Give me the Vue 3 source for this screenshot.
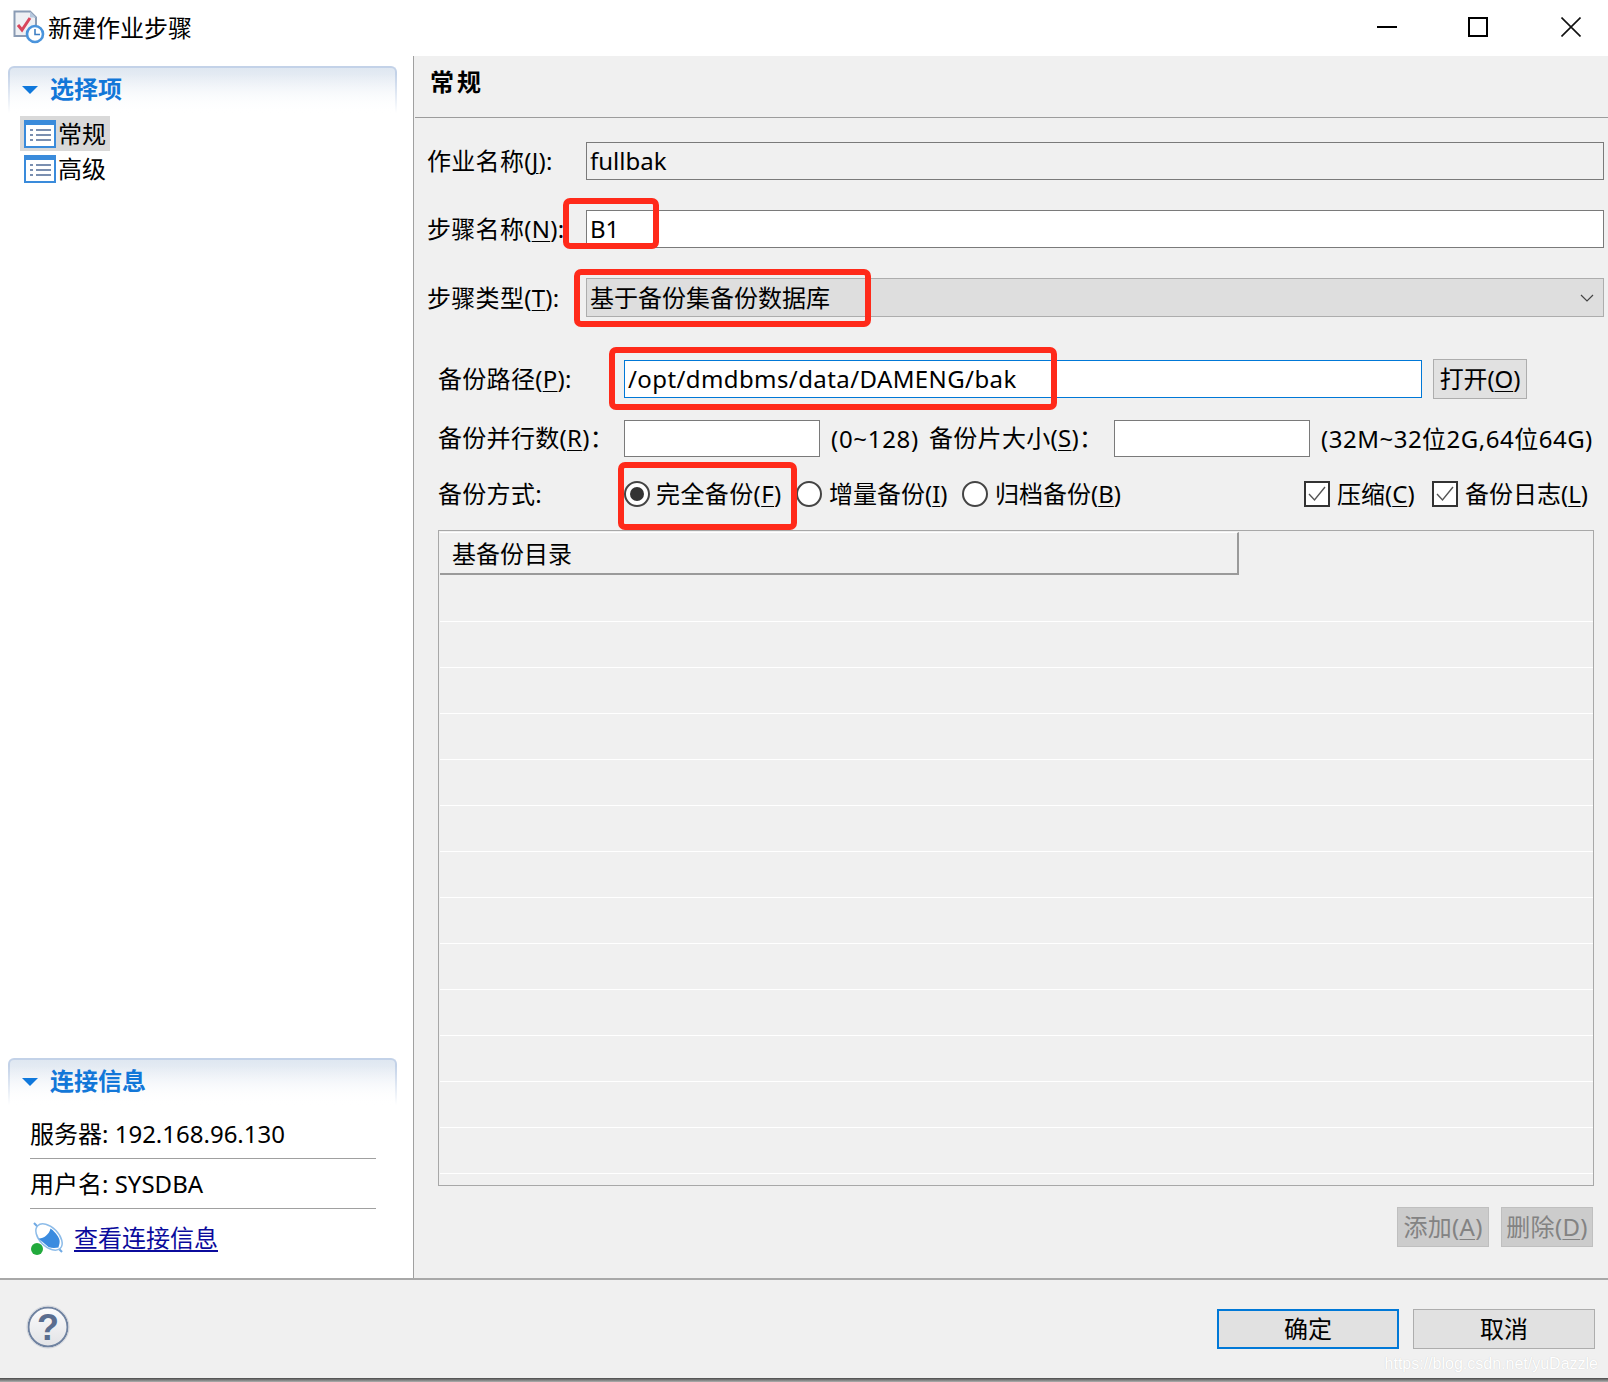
<script setup>
const rows = Array.from({ length: 13 }, (_, i) => i)
</script>

<template>
  <div class="app">
    <header class="titlebar">
      <svg class="app-icon" width="32" height="34" viewBox="0 0 32 34">
        <path d="M1.5 1.5H17L23 7.5V26H1.5Z" fill="#eef0f4" stroke="#8a9bb4" stroke-width="2" />
        <path d="M17 1.5V7.5H23Z" fill="#b7c8de" />
        <path d="M5 15L9 20L17 8" fill="none" stroke="#d8455c" stroke-width="3" />
        <circle cx="22" cy="24" r="8" fill="#fff" stroke="#4a94dc" stroke-width="2.6" />
        <path d="M22 19V24.5H27" fill="none" stroke="#3f7fc4" stroke-width="1.6" />
      </svg>
      <span class="title-text">新建作业步骤</span>
      <div class="win-controls">
        <svg width="20" height="20" viewBox="0 0 20 20"><path d="M0 10H20" stroke="#000" stroke-width="2" /></svg>
        <svg width="20" height="20" viewBox="0 0 20 20"><rect x="1" y="1" width="18" height="18" fill="none" stroke="#000" stroke-width="2" /></svg>
        <svg class="close" width="20" height="20" viewBox="0 0 20 20"><path d="M0.5 0.5L19.5 19.5M19.5 0.5L0.5 19.5" stroke="#111" stroke-width="1.6" /></svg>
      </div>
    </header>

    <main class="main">
      <aside class="left">
        <section class="section-head">
          <span class="tri"></span><span class="section-title">选择项</span>
        </section>
        <ul class="tree">
          <li class="tree-item selected">
            <svg class="tree-icon" width="32" height="28" viewBox="0 0 32 28">
              <rect x="1" y="1" width="30" height="26" fill="#fff" stroke="#3a8bdb" stroke-width="2" />
              <rect x="0" y="0" width="32" height="5" fill="#3a8bdb" />
              <path d="M6 10H9M12 10H27M6 15H9M12 15H27M6 20H9M12 20H27" stroke="#7a8fb0" stroke-width="2" />
            </svg>
            <span>常规</span>
          </li>
          <li class="tree-item">
            <svg class="tree-icon" width="32" height="28" viewBox="0 0 32 28">
              <rect x="1" y="1" width="30" height="26" fill="#fff" stroke="#3a8bdb" stroke-width="2" />
              <rect x="0" y="0" width="32" height="5" fill="#3a8bdb" />
              <path d="M6 10H9M12 10H27M6 15H9M12 15H27M6 20H9M12 20H27" stroke="#7a8fb0" stroke-width="2" />
            </svg>
            <span>高级</span>
          </li>
        </ul>

        <div class="spacer"></div>

        <section class="section-head">
          <span class="tri"></span><span class="section-title">连接信息</span>
        </section>
        <div class="conn">
          <div class="conn-row">服务器: 192.168.96.130</div>
          <div class="conn-row">用户名: SYSDBA</div>
          <div class="conn-link">
            <svg width="34" height="34" viewBox="0 0 34 34">
              <path d="M4 2L32 31" stroke="#6fa9e4" stroke-width="2" />
              <ellipse cx="19" cy="16" rx="16" ry="9.5" transform="rotate(45 19 16)" fill="#fff" stroke="#8dbce9" stroke-width="1.5" />
              <path d="M8.5 17.5C13 18 19 14 20.5 7.5C23 9 27 13 29 17.5C30.5 21 29 24 28.5 26.5C26 27 22 27.5 18.5 26Z" fill="#3a8bdf" />
              <circle cx="7" cy="28" r="6" fill="#22aa3c" />
            </svg>
            <a class="link">查看连接信息</a>
          </div>
        </div>
      </aside>

      <div class="right">
        <h2 class="page-title">常规</h2>
        <div class="form">
          <div class="row r1">
            <label class="lab">作业名称(<u>J</u>):</label>
            <div class="input readonly">fullbak</div>
          </div>
          <div class="row r2">
            <label class="lab">步骤名称(<u>N</u>):</label>
            <div class="input">B1</div>
          </div>
          <div class="row r3">
            <label class="lab">步骤类型(<u>T</u>):</label>
            <div class="input combo">
              <span>基于备份集备份数据库</span>
              <svg width="14" height="8" viewBox="0 0 14 8"><path d="M1 1L7 7L13 1" fill="none" stroke="#444" stroke-width="1.2" /></svg>
            </div>
          </div>
          <div class="sub">
            <div class="row r4">
              <label class="lab2">备份路径(<u>P</u>):</label>
              <div class="input focus">/opt/dmdbms/data/DAMENG/bak</div>
              <button class="btn open">打开(<u>O</u>)</button>
            </div>
            <div class="row r5">
              <label class="lab2">备份并行数(<u>R</u>)：</label>
              <div class="input small"></div>
              <span class="range1">(0~128)</span>
              <label class="lab3">备份片大小(<u>S</u>)：</label>
              <div class="input small2"></div>
              <span class="range2">(32M~32位2G,64位64G)</span>
            </div>
            <div class="row r6">
              <label class="lab2">备份方式:</label>
              <span class="opt o1"><i class="radio on"></i><span class="opt-text">完全备份(<u>F</u>)</span></span>
              <span class="opt o2"><i class="radio"></i><span>增量备份(<u>I</u>)</span></span>
              <span class="opt o3"><i class="radio"></i><span>归档备份(<u>B</u>)</span></span>
              <span class="chk c1">
                <svg width="26" height="26" viewBox="0 0 26 26"><rect x="1" y="1" width="24" height="24" fill="#fff" stroke="#333" stroke-width="2" /><path d="M5 13L10.5 19L21 6" fill="none" stroke="#555" stroke-width="1.4" /></svg>
                <span>压缩(<u>C</u>)</span>
              </span>
              <span class="chk c2">
                <svg width="26" height="26" viewBox="0 0 26 26"><rect x="1" y="1" width="24" height="24" fill="#fff" stroke="#333" stroke-width="2" /><path d="M5 13L10.5 19L21 6" fill="none" stroke="#555" stroke-width="1.4" /></svg>
                <span>备份日志(<u>L</u>)</span>
              </span>
            </div>
            <div class="table">
              <div class="thead">基备份目录</div>
              <div v-for="r in rows" :key="r" class="trow"></div>
            </div>
            <div class="actions">
              <button class="btn disabled add">添加(<u>A</u>)</button>
              <button class="btn disabled">删除(<u>D</u>)</button>
            </div>
          </div>
        </div>
      </div>
    </main>

    <footer class="footer">
      <svg class="help" width="44" height="44" viewBox="0 0 44 44">
        <defs>
          <linearGradient id="helpFill" x1="0" y1="0" x2="0" y2="1">
            <stop offset="0" stop-color="#fbfbfc" />
            <stop offset="1" stop-color="#e2e3e6" />
          </linearGradient>
        </defs>
        <circle cx="22" cy="22" r="19.5" fill="url(#helpFill)" stroke="#6f82a0" stroke-width="2" />
        <circle cx="22" cy="22" r="21" fill="none" stroke="#cfd3da" stroke-width="1" />
        <text x="22" y="35" text-anchor="middle" class="help-q">?</text>
      </svg>
      <div class="foot-btns">
        <button class="btn big primary">确定</button>
        <button class="btn big">取消</button>
      </div>
      <span class="watermark">https://blog.csdn.net/yuDazzle</span>
    </footer>
    <div class="edge"></div>

    <div class="mark m1"></div>
    <div class="mark m2"></div>
    <div class="mark m3"></div>
    <div class="mark m4"></div>
  </div>
</template>

<style>
html, body { margin: 0; padding: 0; background: #fff; }
</style>

<style scoped>
.app {
  position: relative;
  width: 1608px;
  height: 1382px;
  display: flex;
  flex-direction: column;
  overflow: hidden;
  background: #fff;
  color: #000;
  font-family: "Noto Sans", "Noto Sans CJK SC", sans-serif;
  font-size: 24px;
  line-height: 32px;
}
u { text-underline-offset: 3px; text-decoration-thickness: 1px; }
.titlebar {
  height: 56px;
  flex: none;
  display: flex;
  align-items: center;
  padding-left: 13px;
  box-sizing: border-box;
}
.app-icon { margin-right: 3px; margin-top: -2px; }
.title-text { flex: none; }
.win-controls {
  margin-left: auto;
  display: flex;
  gap: 71px;
  padding-right: 27px;
  margin-top: -2px;
}
.close { margin-left: 2px; }
.main { flex: none; height: 1222px; display: flex; }
.left {
  width: 414px;
  flex: none;
  box-sizing: border-box;
  border-right: 1px solid #a0a0a0;
  padding: 10px 16px 0 8px;
  display: flex;
  flex-direction: column;
}
.section-head {
  position: relative;
  height: 47px;
  flex: none;
  box-sizing: border-box;
  border: 2px solid #c3d2e8;
  border-bottom: 0;
  border-radius: 6px 6px 0 0;
  background: linear-gradient(#dfe7f1, #fff);
  display: flex;
  align-items: center;
  padding: 0 0 4px 12px;
}
.section-head::after {
  content: "";
  position: absolute;
  left: -2px;
  right: -2px;
  top: 6px;
  bottom: 0;
  background: linear-gradient(rgba(255,255,255,0), #fff);
}
.tri {
  position: relative;
  z-index: 1;
  width: 0;
  height: 0;
  border-left: 8px solid transparent;
  border-right: 8px solid transparent;
  border-top: 8px solid #0f78dc;
  margin-right: 12px;
  margin-top: 2px;
}
.section-title {
  position: relative;
  z-index: 1;
  color: #1277d8;
  font-weight: 700;
}
.tree { list-style: none; margin: 3px 0 0; padding: 0 0 0 12px; }
.tree-item {
  display: flex;
  align-items: center;
  width: max-content;
  height: 35px;
  padding: 0 4px 0 4px;
  gap: 2px;
}
.tree-item.selected { background: #d9d9d9; }
.spacer { height: 872px; flex: none; }
.conn { padding: 0 21px 0 22px; }
.conn-row {
  height: 50px;
  line-height: 50px;
  box-sizing: border-box;
  border-bottom: 1px solid #a0a0a0;
  white-space: nowrap;
}
.conn-row:first-child { margin-top: 4px; }
.conn-link {
  display: flex;
  align-items: center;
  gap: 10px;
  margin-top: 12px;
}
.link { color: #0b0b9c; text-decoration: underline; text-underline-offset: 3px; }
.right {
  flex: 1;
  min-width: 0;
  background: #f0f0f0;
  display: flex;
  flex-direction: column;
}
.page-title {
  margin: 0 0 0 1px;
  height: 62px;
  flex: none;
  box-sizing: border-box;
  border-bottom: 1px solid #9c9c9c;
  padding: 10px 0 0 15px;
  font-size: 24px;
  font-weight: 700;
  letter-spacing: 3px;
  line-height: 32px;
}
.form { padding: 24px 4px 0 13px; }
.row { display: flex; align-items: center; white-space: nowrap; }
.lab { width: 159px; flex: none; letter-spacing: 0.3px; }
.lab2 { width: 186px; flex: none; letter-spacing: 0.3px; }
.lab3 { width: 185px; flex: none; letter-spacing: 0.3px; }
.r1 { height: 38px; }
.r2 { height: 38px; margin-top: 30px; }
.r3 { height: 39px; margin-top: 30px; }
.input {
  flex: 1;
  min-width: 0;
  height: 100%;
  box-sizing: border-box;
  border: 1px solid #7a7a7a;
  background: #fff;
  padding-left: 3px;
  line-height: 36px;
}
.readonly { background: #f0f0f0; }
.combo {
  background: #dedede;
  border-color: #adadad;
  display: flex;
  align-items: center;
  justify-content: space-between;
  padding-right: 9px;
}
.sub { padding: 43px 0 0 11px; }
.r4 { height: 38px; }
.focus { flex: none; width: 798px; border-color: #0078d7; letter-spacing: 0.4px; }
.open { margin-left: 11px; width: 94px; height: 40px; letter-spacing: -0.1px; padding-right: 3px; }
.btn {
  box-sizing: border-box;
  border: 1px solid #adadad;
  background: #e1e1e1;
  font: inherit;
  color: #000;
  padding: 0;
  white-space: nowrap;
}
.r5 { height: 37px; margin-top: 22px; }
.r5 label { margin-top: -2px; }
.small { flex: none; width: 196px; }
.small2 { flex: none; width: 196px; }
.range1 { width: 109px; flex: none; padding-left: 11px; box-sizing: border-box; letter-spacing: 0.7px; }
.range2 { padding-left: 11px; letter-spacing: 0.5px; }
.r6 { height: 34px; margin-top: 20px; }
.opt { display: flex; align-items: center; flex: none; }
.opt-text { letter-spacing: 0.4px; }
.o1 { width: 172px; }
.o2 { width: 166px; }
.o3 { width: 342px; }
.radio {
  width: 26px;
  height: 26px;
  flex: none;
  box-sizing: border-box;
  border: 2px solid #444;
  border-radius: 50%;
  background: #fff;
  margin-right: 6px;
  position: relative;
}
.o2 .radio, .o3 .radio { margin-right: 7px; }
.radio.on::after {
  content: "";
  position: absolute;
  left: 4px;
  top: 4px;
  width: 14px;
  height: 14px;
  border-radius: 50%;
  background: #333;
}
.chk { display: flex; align-items: center; flex: none; gap: 7px; }
.c1 { width: 128px; }
.table {
  margin-top: 19px;
  width: 1156px;
  height: 656px;
  box-sizing: border-box;
  border: 1px solid #a8a8a8;
  padding: 1px 0 0 1px;
}
.thead {
  width: 799px;
  height: 43px;
  margin-bottom: 1px;
  box-sizing: border-box;
  border-top: 1px solid #fff;
  border-right: 2px solid #9a9a9a;
  border-bottom: 2px solid #9a9a9a;
  padding-left: 12px;
  line-height: 41px;
}
.trow { height: 46px; box-sizing: border-box; border-bottom: 1px solid #fff; }
.actions {
  display: flex;
  justify-content: flex-end;
  gap: 12px;
  margin-top: 21px;
  width: 1155px;
}
.disabled {
  width: 92px;
  height: 40px;
  background: #cccccc;
  border-color: #bfbfbf;
  color: #838383;
  letter-spacing: 0.3px;
}
.footer {
  flex: none;
  position: relative;
  height: 100px;
  box-sizing: border-box;
  border-top: 2px solid #a8a8a8;
  background: #f0f0f0;
  display: flex;
  align-items: flex-start;
  padding: 25px 13px 0 26px;
}
.help-q { font: 700 36px "Liberation Sans", sans-serif; fill: #5a6d8f; }
.foot-btns { margin-left: auto; display: flex; gap: 14px; padding-top: 4px; }
.big { width: 182px; height: 40px; }
.primary { border: 2px solid #0078d7; }
.watermark {
  position: absolute;
  right: 10px;
  bottom: 3px;
  font: 16px/22px "Liberation Sans", sans-serif;
  color: #fff;
  text-shadow: 0 0 1px #c8c8c8;
}
.edge { flex: none; height: 4px; background: linear-gradient(#4a4a4a, #b0b0b0); }
.mark {
  position: absolute;
  box-sizing: border-box;
  border: 6px solid #ff2a1a;
  border-radius: 7px;
  pointer-events: none;
}
.m1 { left: 563px; top: 198px; width: 96px; height: 51px; }
.m2 { left: 574px; top: 269px; width: 297px; height: 58px; }
.m3 { left: 609px; top: 347px; width: 448px; height: 63px; }
.m4 { left: 618px; top: 462px; width: 179px; height: 68px; }
</style>
